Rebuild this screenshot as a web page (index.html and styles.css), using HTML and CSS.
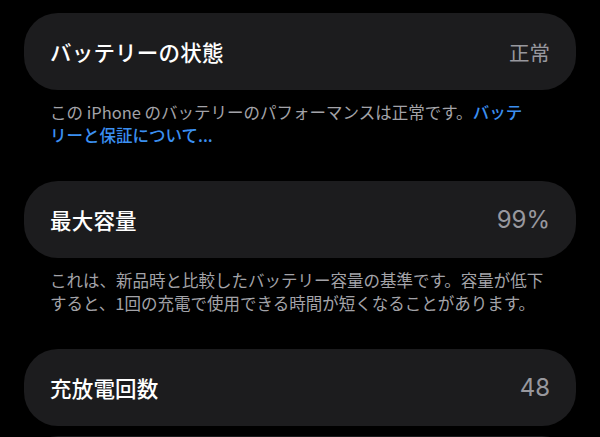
FILE: index.html
```html
<!DOCTYPE html>
<html lang="ja">
<head>
  <meta charset="UTF-8">
  <meta name="viewport" content="width=device-width, initial-scale=1.0">
  <title>バッテリーの状態</title>
  <link rel="stylesheet" href="styles.css">
</head>
<body>

  <!-- 状態 -->
  <div class="card">
    <span class="label">バッテリーの状態</span>
    <span class="value value-text">正常</span>
  </div>
  <p class="note">この iPhone のバッテリーのパフォーマンスは正常です。<a href="#" class="link">バッテ<br>リーと保証について...</a></p>

  <!-- 最大容量 -->
  <div class="card">
    <span class="label">最大容量</span>
    <span class="value">99%</span>
  </div>
  <p class="note">これは、新品時と比較したバッテリー容量の基準です。容量が低下すると、1回の充電で使用できる時間が短くなることがあります。</p>

  <!-- 充放電回数 -->
  <div class="card">
    <span class="label">充放電回数</span>
    <span class="value">48</span>
  </div>

  <div class="card card-next"></div>

</body>
</html>
```

FILE: styles.css
```css
body {
  margin: 0;
  padding: 13px 24px 0;
  background: #000;
  color: #fff;
  font-family: "Noto Sans CJK JP", "Noto Sans", sans-serif;
}

.card {
  height: 77px;
  padding: 0 26px;
  display: flex;
  align-items: center;
  justify-content: space-between;
  background: #1c1c1e;
  border-radius: 34px;
}

.card-next {
  margin-top: 10px;
}

.label {
  font-size: 21.5px;
  font-weight: 500;
  letter-spacing: 0.2px;
}

.value {
  font-family: Inter, "Noto Sans CJK JP", sans-serif;
  font-size: 24px;
  color: #98989e;
}

.value-text {
  font-family: "Noto Sans CJK JP", sans-serif;
  font-size: 20.5px;
}

.note {
  margin: 11px 0 35px;
  padding: 0 24px 0 26px;
  font-size: 16.5px;
  line-height: 22.5px;
  color: #a3a3a8;
}

.link {
  color: #3b8ff0;
  font-weight: 500;
  text-decoration: none;
}
```
